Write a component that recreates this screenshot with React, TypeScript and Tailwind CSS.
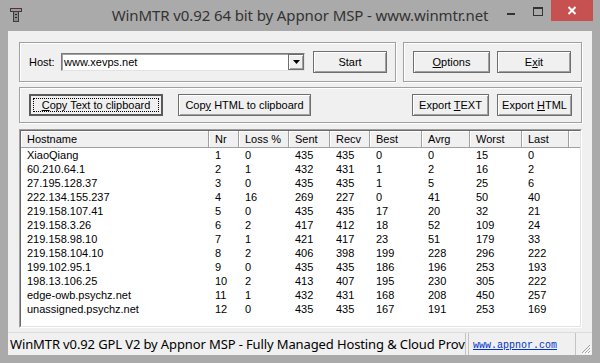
import React from 'react';

const COLS = [
    { label: 'Hostname', w: 'w-[188px]' },
    { label: 'Nr', w: 'w-[30px]' },
    { label: 'Loss %', w: 'w-[50px]' },
    { label: 'Sent', w: 'w-[41px]' },
    { label: 'Recv', w: 'w-[40px]' },
    { label: 'Best', w: 'w-[52px]' },
    { label: 'Avrg', w: 'w-[48px]' },
    { label: 'Worst', w: 'w-[52px]' },
    { label: 'Last', w: 'w-[47px]' },
];

const ROWS: (string | number)[][] = [
    ['XiaoQiang', 1, 0, 435, 435, 0, 0, 15, 0],
    ['60.210.64.1', 2, 1, 432, 431, 1, 2, 16, 2],
    ['27.195.128.37', 3, 0, 435, 435, 1, 5, 25, 6],
    ['222.134.155.237', 4, 16, 269, 227, 0, 41, 50, 40],
    ['219.158.107.41', 5, 0, 435, 435, 17, 20, 32, 21],
    ['219.158.3.26', 6, 2, 417, 412, 18, 52, 109, 24],
    ['219.158.98.10', 7, 1, 421, 417, 23, 51, 179, 33],
    ['219.158.104.10', 8, 2, 406, 398, 199, 228, 296, 222],
    ['199.102.95.1', 9, 0, 435, 435, 186, 196, 253, 193],
    ['198.13.106.25', 10, 2, 413, 407, 195, 230, 305, 222],
    ['edge-owb.psychz.net', 11, 1, 432, 431, 168, 208, 450, 257],
    ['unassigned.psychz.net', 12, 0, 435, 435, 167, 191, 253, 169],
];

const raised = 'border border-[#6f6f6f] shadow-[inset_1px_1px_0_#ffffff,inset_-1px_-1px_0_#a0a0a0]';
const groupBox = 'border border-[#a0a0a0] shadow-[inset_1px_1px_0_#ffffff,1px_1px_0_#ffffff]';

function Btn({ w, children, def }: { w: string; children: React.ReactNode; def?: boolean }) {
    if (def) {
        return (
            <div className={`${w} h-[22px] border-2 border-[#5a5a5a] bg-[#f0f0f0] p-[2px] flex`}>
                <div className="flex-1 border border-dotted border-black flex items-center justify-center leading-none">
                    <span className="whitespace-pre">{children}</span>
                </div>
            </div>
        );
    }
    return (
        <div className={`${w} h-[22px] ${raised} bg-[#f0f0f0] flex items-center justify-center leading-none`}>
            <span className="whitespace-pre">{children}</span>
        </div>
    );
}

function TitleBar() {
    return (
        <div className="grid grid-cols-[1fr_auto_1fr] h-[31px]">
            <div className="pl-[10px] pt-[8px]">
                <svg width="12" height="14" viewBox="0 0 12 14">
                    <rect x="0.5" y="0.5" width="11" height="3" fill="#9a9a9a" stroke="#3c3c3c" />
                    <line x1="2" y1="2" x2="10" y2="2" stroke="#c98a8a" />
                    <rect x="3.5" y="3.5" width="5" height="10" fill="#8a8a8a" stroke="#3c3c3c" />
                    <rect x="5" y="6" width="2" height="1" fill="#2a2a2a" />
                    <rect x="5" y="9" width="2" height="1" fill="#2a2a2a" />
                </svg>
            </div>
            <div className="text-[15px] leading-[30px] text-[#333333] font-['Noto_Sans','Liberation_Sans',sans-serif] tracking-[-0.1px]">
                WinMTR v0.92 64 bit by Appnor MSP - www.winmtr.net
            </div>
            <div className="flex justify-end items-start pr-[7px]">
                <div className="w-[26px] h-[21px] flex justify-center">
                    <div className="mt-[13px] w-[8px] h-[2px] bg-[#333333]" />
                </div>
                <div className="w-[27px] h-[21px] flex justify-center">
                    <div className="mt-[7px] w-[10px] h-[9px] border border-t-2 border-[#333333]" />
                </div>
                <div className="w-[42px] h-[21px] bg-[#c75050] flex items-center justify-center">
                    <svg width="10" height="9" viewBox="0 0 10 9">
                        <path d="M1.5 1 L8.5 8 M8.5 1 L1.5 8" stroke="#ffffff" strokeWidth="2" />
                    </svg>
                </div>
            </div>
        </div>
    );
}

export default function App() {
    return (
        <div className="w-[600px] h-[363px] bg-[#aaaaaa] overflow-hidden text-black font-['Liberation_Sans',Arial,sans-serif] text-[11px]">
            <TitleBar />

            <div className="ml-[8px] w-[584px] h-[324px] bg-[#f0f0f0] flex flex-col pt-[11px] pl-[11px] pr-[10px]">
                {/* Host + start / options + exit */}
                <div className="flex gap-[7px] h-[40px]">
                    <div className={`w-[377px] ${groupBox} flex items-center pl-[9px]`}>
                        <span className="w-[32px]">Host:</span>
                        <div className="w-[244px] h-[18px] bg-white border border-[#7a7a7a] border-b-[#e3e3e3] border-r-[#e3e3e3] shadow-[inset_1px_1px_0_#a0a0a0] flex items-center">
                            <span className="flex-1 pl-[2px] leading-none">www.xevps.net</span>
                            <div className={`w-[16px] h-[16px] ${raised} bg-[#f0f0f0] flex items-center justify-center`}>
                                <svg width="7" height="4" viewBox="0 0 7 4">
                                    <path d="M0 0 H7 L3.5 4 Z" fill="#000000" />
                                </svg>
                            </div>
                        </div>
                        <div className="ml-[8px]">
                            <Btn w="w-[74px]">Start</Btn>
                        </div>
                    </div>
                    <div className={`flex-1 ${groupBox} flex items-center pl-[9px] gap-[7px]`}>
                        <Btn w="w-[77px]"><span className="underline">O</span>ptions</Btn>
                        <Btn w="w-[74px]">E<span className="underline">x</span>it</Btn>
                    </div>
                </div>

                {/* Copy / export */}
                <div className={`mt-[5px] h-[36px] ${groupBox} flex items-center pl-[9px] pr-[9px]`}>
                    <Btn w="w-[134px]" def><span className="underline">C</span>opy Text to clipboard</Btn>
                    <div className="ml-[15px]">
                        <Btn w="w-[133px]">Cop<span className="underline">y</span> HTML to clipboard</Btn>
                    </div>
                    <div className="ml-auto flex gap-[8px]">
                        <Btn w="w-[77px]">Export <span className="underline">T</span>EXT</Btn>
                        <Btn w="w-[75px]">Export <span className="underline">H</span>TML</Btn>
                    </div>
                </div>

                {/* Results list */}
                <div className="mt-[6px] h-[199px] w-[563px] bg-white border border-[#a0a0a0] border-b-white border-r-white">
                    <div className="h-full border border-[#696969] border-b-[#e3e3e3] border-r-[#e3e3e3] overflow-hidden">
                        <div className="flex h-[17px] bg-[#f0f0f0]">
                            {COLS.map((c) => (
                                <div
                                    key={c.label}
                                    className={`${c.w} shrink-0 pl-[6px] leading-[16px] border-r border-b border-[#a0a0a0] shadow-[inset_1px_1px_0_#ffffff]`}
                                >
                                    {c.label}
                                </div>
                            ))}
                            <div className="flex-1 border-b border-[#a0a0a0] shadow-[inset_1px_1px_0_#ffffff]" />
                        </div>
                        {ROWS.map((r) => (
                            <div key={r[0] as string} className="flex h-[14px] leading-[14px]">
                                {r.map((v, i) => (
                                    <div key={i} className={`${COLS[i].w} shrink-0 pl-[6px] whitespace-nowrap`}>
                                        {v}
                                    </div>
                                ))}
                            </div>
                        ))}
                    </div>
                </div>

                {/* Status bar */}
                <div className="mt-[4px] -ml-[11px] -mr-[10px] h-[23px] flex items-stretch border-t border-[#dcdcdc]">
                    <div className="w-[458px] border-r border-[#c4c4c4] overflow-hidden whitespace-nowrap pl-[2px] text-[13px] leading-[22px] tracking-[-0.12px] font-['Noto_Sans','Liberation_Sans',sans-serif]">
                        WinMTR v0.92 GPL V2 by Appnor MSP - Fully Managed Hosting &amp; Cloud Provider
                    </div>
                    <div className="ml-[2px] w-[108px] border-l border-r border-[#c4c4c4] pl-[4px] leading-[22px]">
                        <span className="font-['Liberation_Mono',monospace] text-[10px] text-[#0033cc] underline">
                            www.appnor.com
                        </span>
                    </div>
                    <div className="flex-1 flex items-end justify-end pr-[1px] pb-[1px]">
                        <svg width="11" height="11" viewBox="0 0 11 11">
                            <path d="M10 2 L2 10 M10 5 L5 10 M10 8 L8 10" stroke="#a0a0a0" strokeWidth="1" />
                            <path d="M11 3 L3 11 M11 6 L6 11 M11 9 L9 11" stroke="#ffffff" strokeWidth="1" />
                        </svg>
                    </div>
                </div>
            </div>
        </div>
    );
}
